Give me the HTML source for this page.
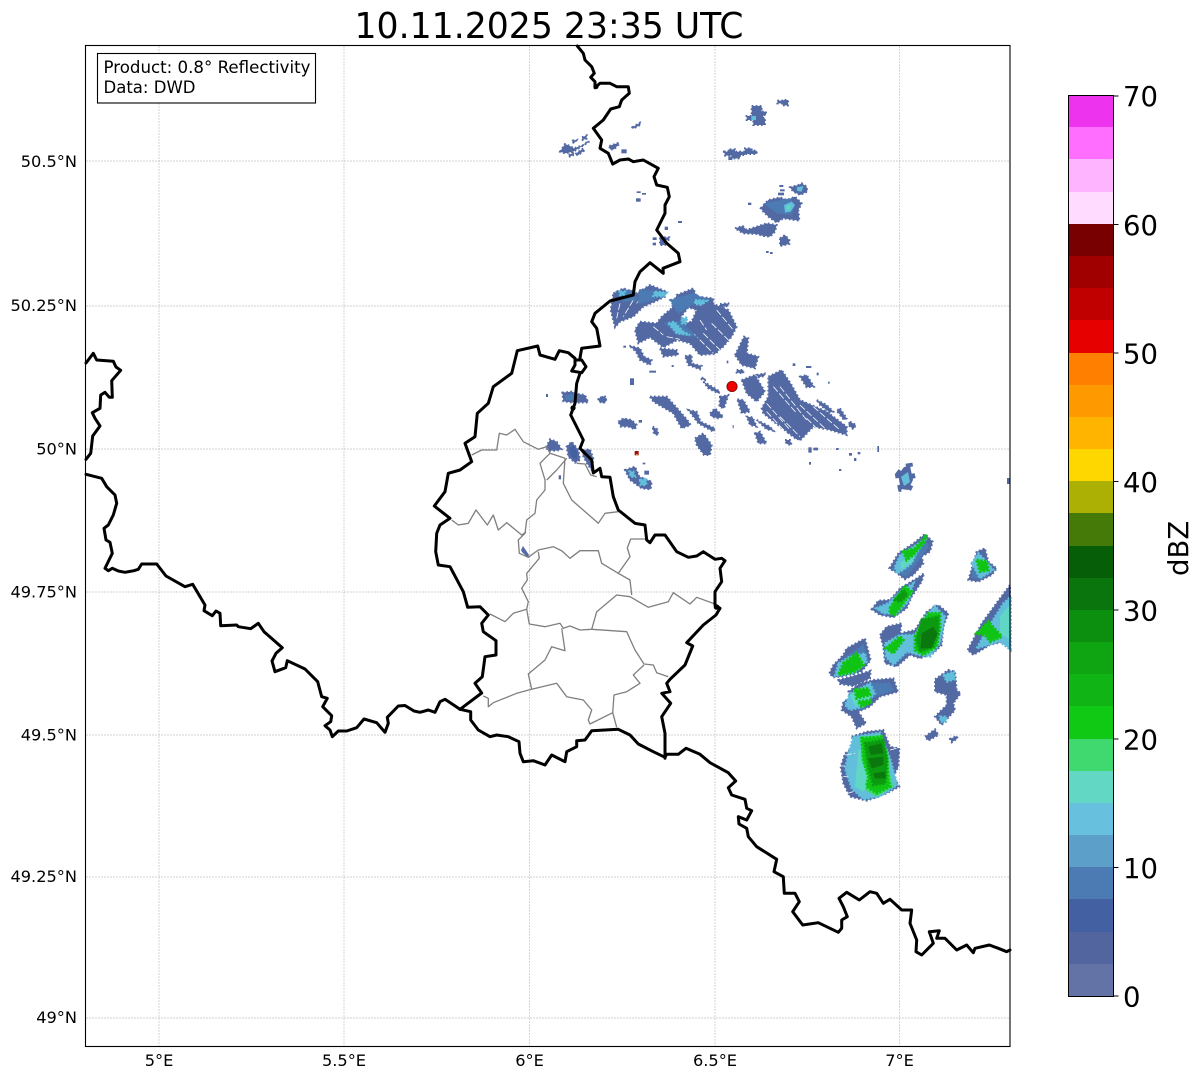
<!DOCTYPE html>
<html><head><meta charset="utf-8"><style>
html,body{margin:0;padding:0;background:#fff;width:1202px;height:1081px;overflow:hidden}
svg{display:block}
text{font-family:"DejaVu Sans","Liberation Sans",sans-serif;fill:#000}
.b{fill:#5369a3}.m{fill:#4c7ab2}.l{fill:#62bfdc}.t{fill:#60d6c4}.g{fill:#10c414}.d{fill:#0c9a10}.k{fill:#0a780d}.f{fill:#3fd970}
g.b path{stroke:#5369a3;stroke-width:6;stroke-dasharray:5 7}
g.m path{stroke:#4c7ab2;stroke-width:5;stroke-dasharray:6 6}
g.l path{stroke:#62bfdc;stroke-width:7;stroke-dasharray:6 5}
g.g path{stroke:#10c414;stroke-width:9;stroke-dasharray:7 4}
g.d path{stroke:#0c9a10;stroke-width:8;stroke-dasharray:6 4}
.w{stroke:#fff;stroke-width:2.4;fill:none;stroke-dasharray:20 7}
</style></head><body>
<svg width="1202" height="1081" viewBox="0 0 1202 1081" xmlns="http://www.w3.org/2000/svg">
<rect width="1202" height="1081" fill="#fff"/>
<!-- grid -->
<g stroke="#c2c2c2" stroke-width="0.7" stroke-dasharray="2 1" fill="none">
<path d="M159 46V1046M344 46V1046M529.5 46V1046M715 46V1046M899.5 46V1046"/>
<path d="M86 161H1010M86 306H1010M86 449H1010M86 592H1010M86 735H1010M86 877H1010M86 1018H1010"/>
</g>
<!-- radar north (zoom 4 coords) -->
<g transform="translate(550 90) scale(.33333)">
<g class="b">
<path d="M605 48H635V65H648V75H640V85H645V105H610V90H590V78H605Z"/>
<path d="M682 32H700V30H714V46H698V40H682Z"/>
<path d="M522 185H535V178H555V185H585V175H605V182H620V192H585V195H570V205H545V197H525Z"/><rect x="535" y="200" width="12" height="10"/>
<path d="M632 355L655 330L690 322L710 330L735 320L755 340L745 360L748 392L700 385L680 398L655 380L640 365Z"/>
<path d="M720 292L745 285L755 280L770 290L772 305L750 315L730 305Z"/>
<path d="M555 415L578 408L590 420L620 410L650 400L680 405L675 425L660 440L640 438L620 432L580 430Z"/>
<path d="M690 445L705 435L718 450L718 462L690 468Z"/>
<rect x="688" y="285" width="12" height="6"/><rect x="690" y="298" width="14" height="6"/><rect x="684" y="308" width="18" height="8"/><rect x="594" y="338" width="10" height="7"/><rect x="648" y="483" width="8" height="6"/><rect x="660" y="486" width="8" height="6"/>
<path d="M30 185L45 162L60 168L72 175L100 165L115 152L116 156L70 185L45 190Z"/><path d="M68 152L80 150L75 158L66 158Z"/><path d="M96 142L110 136L110 146L98 150Z"/><path d="M56 195L72 188L72 194L60 200Z"/><path d="M76 192L100 175L102 182L84 196Z"/>
<path d="M178 168L207 158L205 165L192 178L180 178Z"/><rect x="214" y="178" width="16" height="12"/><path d="M247 112L270 98L272 104L250 116Z"/>
<rect x="260" y="304" width="12" height="5"/><rect x="276" y="309" width="12" height="5"/><rect x="258" y="325" width="14" height="10"/>
<rect x="384" y="393" width="12" height="6"/><rect x="344" y="410" width="10" height="10"/><rect x="308" y="442" width="12" height="8"/><path d="M330 442H358V450H345V465H330Z"/><rect x="308" y="458" width="10" height="8"/>
</g>
<path class="l" d="M604 78H618V90H604Z"/>
<path class="m" d="M640 340L720 325L735 345L725 375L680 370Z"/>
<path class="l" d="M702 345L725 335L735 345L722 365L705 368Z"/><path class="t" d="M708 350L720 344L722 358L710 360Z"/>
<path class="l" d="M740 292L760 288L755 305L742 303Z"/>
</g>
<!-- radar central (zoom 5 coords) -->
<g transform="translate(600 280) scale(.33333)">
<g class="b">
<path d="M40 40L70 25L110 40L150 15L200 35L195 50L165 65L130 80L100 110L60 125L45 142L32 90Z"/>
<path fill-rule="evenodd" d="M230 45L280 25L290 50L340 55L340 72L385 90L410 140L395 170L370 200L345 222L300 225L270 190L232 180L190 202L150 172L115 190L105 150L120 125L170 130L185 110L215 85ZM240 115L265 82L290 90L275 125L250 130Z"/>
<path d="M405 225L432 170L445 175L440 220L475 230L465 265L425 255Z"/>
<path d="M505 290L545 270L572 310L600 360L680 395L740 440L740 465L690 450L640 440L600 482L540 440L490 400L485 385L505 350Z"/>
<path d="M425 300L465 285L495 335L470 365L440 340Z"/>
<path d="M600 290L620 285L642 320L620 322Z"/>
<path d="M360 350L385 345L372 385L358 380Z"/><path d="M412 358L430 360L450 395L425 400Z"/><path d="M440 410L458 412L470 440L450 435Z"/><path d="M465 460L480 455L500 490L475 490Z"/><path d="M555 480L570 480L575 495L560 492Z"/>
<path d="M150 350L200 350L232 385L262 420L272 435L245 445L220 400L160 365Z"/>
<path d="M265 390L290 395L302 425L345 445L340 455L295 430Z"/>
<path d="M330 400L345 385L370 410L355 415L335 410Z"/>
<path d="M55 425L70 415L95 420L110 435L105 448L85 440L62 440Z"/><rect x="116" y="420" width="10" height="8"/>
<path d="M285 475L310 460L335 495L330 525L312 525L290 495Z"/>
<path d="M75 570L105 560L118 590L155 605L152 628L125 625L90 600Z"/>
<path d="M158 440L172 448L175 465L162 462Z"/>
<rect x="90" y="295" width="12" height="20"/><path d="M0 353L15 350L18 365L5 368Z"/>
<path d="M255 228L275 225L275 250L305 258L300 268L265 255Z"/>
<path d="M88 197L120 205L132 230L155 240L150 255L120 240L108 215Z"/>
<path d="M180 205L230 210L235 225L190 230Z"/>
<path d="M310 305L340 322L360 335L355 340L325 325Z"/><path d="M305 293L315 295L315 300L305 298Z"/>
<rect x="128" y="548" width="8" height="5"/><rect x="133" y="572" width="14" height="12"/>
<rect x="148" y="272" width="20" height="6"/>
<rect x="625" y="502" width="10" height="16"/><rect x="640" y="503" width="14" height="8"/><rect x="708" y="504" width="8" height="6"/><rect x="747" y="519" width="9" height="8"/><rect x="773" y="516" width="8" height="7"/><rect x="762" y="534" width="7" height="9"/><rect x="717" y="567" width="7" height="6"/><rect x="627" y="546" width="6" height="8"/><rect x="832" y="498" width="5" height="18"/>
<path d="M360 72L385 70V78L360 82Z"/><rect x="578" y="250" width="8" height="8"/><rect x="618" y="258" width="16" height="6"/><rect x="650" y="278" width="6" height="8"/><rect x="684" y="305" width="5" height="6"/><rect x="380" y="242" width="5" height="8"/><rect x="398" y="435" width="3" height="10"/><rect x="215" y="255" width="6" height="6"/><rect x="70" y="197" width="8" height="6"/>
<path d="M750 425L768 435L760 448L745 435Z"/><path d="M720 385L740 415L732 420L710 392Z"/><path d="M470 285L494 280V288L475 292Z"/><path d="M410 270L430 270L430 280L410 278Z"/>
<path d="M650 360L680 375L700 395L690 398L660 375Z"/><path d="M470 420L510 440L520 452L500 448Z"/><path d="M560 455L600 470L590 478Z"/>
</g>
<g class="w">
<path d="M520 320L590 400M540 320L620 420M500 370L570 450M540 410L600 470M600 375L680 450M640 380L720 450M500 395L560 460M620 415L670 465"/>
<path d="M280 160L340 220M310 160L365 215M335 130L390 185M200 170L240 178M160 140L190 165M300 120L320 150M350 90L400 150"/>
<path d="M60 70L50 115M100 60L70 110M130 40L110 70"/>
</g>
<g class="m"><path d="M50 35L100 30L110 60L70 65Z"/><path d="M120 30L190 35L160 60L115 70Z"/><path d="M210 60L280 40L330 65L280 70L235 100Z"/><path d="M195 130L240 125L290 170L240 165Z"/></g>
<g class="l"><path d="M165 35L200 38L190 50L160 48Z"/><path d="M205 130L222 125L250 155L270 165L230 160Z"/><path d="M245 115L262 112L256 132L245 130Z"/><path d="M285 60L320 62L305 75L285 72Z"/><path d="M60 35L75 35L72 45L60 45Z"/><path d="M120 600L140 595L138 615L122 615Z"/><path d="M88 575L100 575L105 590L92 590Z"/></g>
<rect x="104" y="513" width="12" height="13" fill="#a01010"/><rect x="108" y="522" width="5" height="4" fill="#d8a020"/>
</g>
<!-- radar west (zoom 1 coords) -->
<g transform="translate(400 240) scale(.33333)">
<g class="b">
<path d="M487 458L515 455L535 462L555 465L565 487L520 488L490 484Z"/><path d="M595 478L610 470L618 478L612 488L598 486Z"/><rect x="438" y="462" width="6" height="9"/>
<path d="M438 622L450 598L470 605L485 628L470 632L445 632Z"/><path d="M500 620L515 605L535 630L540 660L525 668L505 650Z"/>
<path d="M548 630L570 628L580 655L575 690L562 672L548 645Z"/><rect x="476" y="706" width="7" height="12"/>
</g>
<path fill="#4360a2" d="M508 625L522 615L532 640L530 660L515 650Z"/>
<path class="m" d="M495 465L520 462L525 480L497 480Z"/>
</g>
<path class="b" d="M521 550L523 546L529 555L528 558L522 552Z"/>
<!-- radar east (zoom 3 coords) -->
<g transform="translate(800 520) scale(.33333)">
<g class="b">
<path d="M268 145L295 100L340 70L375 42L398 65L390 95L365 110L370 130L340 165L315 178L285 155Z"/>
<path d="M215 268L235 242L270 240L300 205L350 175L372 160L365 185L335 230L320 265L280 292L240 285Z"/>
<path d="M240 345L260 320L305 310L300 340L345 330L380 275L415 255L445 280L430 320L425 375L400 400L360 415L330 405L290 440L255 430L250 380Z"/>
<path d="M88 460L100 435L130 405L140 385L195 355L212 420L185 455L125 470L100 472Z"/><path d="M115 480L160 468L212 452L210 475L160 498L120 492Z"/>
<path d="M145 515L180 490L220 480L280 475L292 510L295 515L240 530L210 560L175 575L198 610L170 625L155 590L125 570L130 545L150 535Z"/>
<path d="M155 650L200 635L250 630L270 680L298 685L295 740L280 770L298 800L250 825L200 842L150 830L130 790L122 740L135 700L165 680Z"/>
<path d="M505 180L520 130L530 95L555 85L565 125L590 145L575 165L535 185Z"/>
<path d="M503 390L545 310L600 235L630 195V385L610 365L570 375L520 405Z"/>
<path d="M405 478L445 450L465 455L470 510L482 520L460 550L465 570L425 615L405 590L440 555L440 525L405 515Z"/>
<path d="M375 650L405 628L415 645L385 662Z"/><path d="M450 657L470 648L473 655L455 667Z"/>
</g>
<g class="m"><path d="M275 150L300 110L340 80L375 55L385 80L350 130L320 170Z"/><path d="M225 265L265 245L300 215L345 185L330 240L290 285L250 282Z"/><path d="M250 380L290 345L345 340L400 260L435 285L420 375L380 410L330 395L285 432L258 420Z"/><path d="M140 410L190 375L205 420L160 462L105 465Z"/><path d="M150 520L220 490L270 490L280 510L220 530L190 570L140 565Z"/><path d="M520 130L535 100L560 125L585 150L540 178L515 170Z"/></g>
<g class="l"><path d="M285 140L300 105L340 80L380 55L350 100L335 130L310 150L290 160Z"/><path d="M228 265L265 250L300 215L340 190L325 245L290 280L250 280Z"/><path d="M255 370L300 345L345 345L375 290L405 258L435 290L420 370L390 410L355 405L320 395L280 435L258 410Z"/><path d="M115 430L150 410L195 400L200 425L165 458L105 468Z"/><path d="M150 520L210 490L225 520L190 560L150 570L135 555Z"/><path d="M160 650L240 638L272 720L292 795L240 830L190 838L155 805L135 745L145 700Z"/><path d="M515 130L535 100L560 125L580 150L540 175Z"/><path d="M530 385L560 330L610 250L632 230V390L600 365Z"/><path d="M430 465L462 455L465 478L440 485Z"/><path d="M420 590L440 590L438 605L422 605Z"/></g>
<g class="t"><path d="M175 690L195 680L210 790L190 815L165 800Z"/><path d="M300 130L340 95L340 125L305 150Z"/><path d="M600 290L632 250V360L600 340Z"/><path d="M345 360L385 340L395 395L355 400Z"/><path d="M150 525L200 500L210 545L165 560Z"/></g>
<g class="f"><path d="M180 650L245 645L265 700L270 760L280 800L230 830L195 810L205 770L185 720Z"/></g>
<g class="g"><path d="M310 95L345 85L380 45L370 70L340 105L320 120Z"/><path d="M270 265L290 230L315 200L335 215L310 250L285 285L270 280Z"/><path d="M258 385L300 350L310 360L280 400Z"/><path d="M345 350L385 280L420 280L420 320L410 380L370 405L345 390Z"/><path d="M130 430L170 400L190 435L165 455L115 465Z"/><path d="M165 510L205 505L210 525L170 535Z"/><path d="M175 545L215 540L210 550L185 560Z"/><path d="M185 655L245 650L260 720L265 780L270 800L230 820L200 800L205 770L190 720Z"/><path d="M530 120L560 125L565 150L540 155Z"/><path d="M530 340L565 305L605 350L570 365L555 345Z"/></g>
<g class="d"><path d="M365 300L415 290L415 340L400 380L360 395L350 360Z"/><path d="M195 670L250 660L262 720L255 790L220 795L205 740Z"/><path d="M285 240L310 210L322 225L300 245Z"/></g>
<g class="k"><path d="M365 340L400 320L412 340L395 385L362 385Z"/><path d="M205 680L245 670L250 700L212 705Z"/><path d="M205 715L250 710L250 735L215 745Z"/><path d="M220 760L255 755L258 775L225 775Z"/></g>
<path class="w" d="M120 738L135 738M130 770L145 768M142 820L160 815M270 690L290 685M255 825L235 835M135 705L165 700"/>
</g>
<g class="b"><path d="M898 475L904 467L910 466L913 480L908 490L901 489Z"/><rect x="1007" y="478" width="3" height="6"/></g>
<path class="l" d="M901 477L908 472L910 482L904 486Z"/>
<!-- borders: gray -->
<g fill="none" stroke="#7f7f7f" stroke-width="1.3" stroke-linejoin="round">
<path d="M471.7 455L481.7 450L496.7 450L499.3 433.3L506.7 435L515 429.3L523.3 441.7L538.3 449.3L546.7 446.7L550 453.3L540 463.3L545 480L545 490L536.7 500L535 513.3L526.7 520L525 533.3L518.3 540L519.3 553.3L528.3 557.3L538.3 550L553.3 546.7L562 551L570 558.3L580 550.7L598.3 550.7L601.7 563.3L618.3 573.3L630 556.7L627.3 548L630.7 539L646.7 539"/>
<path d="M565 458.3L563.3 483.3L571.7 500L598.3 523.3L605 513.3L618.3 511.7M566.7 458.3L556.7 470L546.7 480M576.7 463.3L585 464L590.7 475L596.7 476.7M550 453.3L565 458.3"/>
<path d="M451.7 520L458.3 525L468.3 523.3L476 510L487.3 525L493.3 515L498.3 530L506.7 522.7L521.7 535L526 532"/>
<path d="M538.3 551.7L539.3 558.3L526.7 573.3L527.3 580L521.7 588.3L528.3 601.7L526.7 609.3L513.3 613.3L505 621.7L490 614"/>
<path d="M526.7 609.3L529.3 624L545 626.7L560 623.3L563.3 628.3L570 626L580 630L591.7 629.3L596.7 611.7L616.7 595L630 596.7L648.3 607.3L668.3 601.7L673.3 592.7L690 604L696.7 597.3L715 604"/>
<path d="M618.3 573.3L630 580L631.7 595M591.7 629.3L626.7 631.7L635 650L644 664L653.3 665L656.7 672.7L668.3 676.7"/>
<path d="M644 665L633.3 675L640 683.3L626.7 691.7L614 695L612.7 712.7L616.7 727.3"/>
<path d="M612.7 712.7L590 724L588.3 720L591.7 710L583.3 700L566.7 696.7L556.7 683.3L531.7 689.3L528.3 674L545 660L551.7 646.7L565 650.7L561.7 628.3"/>
<path d="M531.7 689.3L516.7 693.3L493.3 702.7L488.3 706.7L488.3 698.3L483.3 696"/>
</g>
<!-- borders: black -->
<g fill="none" stroke="#000" stroke-width="3" stroke-linejoin="round" stroke-linecap="round">
<path d="M86 363L93.3 353.3L96.7 360L113.3 361.3L116 367L120.7 370.3L111.7 380.7L112.3 397.3L109.3 397.3L105 392.3L100.7 395L100 408.3L92.3 412.7L95 418.3L100 426L92.7 436L90.7 453.3L86 459.3"/>
<path d="M86 474.3L101.7 478.3L106.7 486.7L115 495L116.7 503.3L113.3 515L108.3 525L104 528.3L106 540L110 542.3L112.3 553.3L105 568.3L108.3 570.7L112.3 568.3L118.3 571L125 572.3L134 570.7L138.3 569.3L141.7 564L156.7 564L166 576L185 586.7L192.7 584.3L205 605L204 610.7L212.3 615.7L216 611L220 613.3L220.7 625.7L236.7 625L238.3 626.7L250.7 628.7L258.3 623.3L264 631.7L282.3 647.7L276 653.3L272 661L275 671.7L285.7 667.7L287.3 660.7L305 669L317.7 681.7L321.7 696.7L327.3 698.3L322.7 706.7L331.7 715.7L330.7 721.7L325 725.7L330 730L332.3 736.7L338.3 731L346.7 731L356.7 727.7L364 719L376.7 722.7L385 732.3L388.3 723.3L387.3 717.3L398.3 706L405 705.5L414 711L420 712.3L428.3 710L435 712.3L440 701.7L445 699.3L460 709.3"/>
<path d="M460 709.3L470.7 711.7L470.7 720L478.3 730L490 736.7L496.7 735L508.3 736.7L519 741.7L520 753.3L523.3 761.7L533.3 760.7L545 765L551.7 755L565 761.7L566.7 751.7L576.7 746.7L576.7 740.7L585 740L591.7 730.7L618.3 729.3L630 735L638.3 744L653.3 751.7L665 757.3L666.7 754.3L678.3 754.3L686 748.3L700 754.3L710 762.7L728.3 772.7L735.7 781L728.3 787.7L731.7 795L745 799.3L746.7 808.3L751.7 810.7L746.7 820L738.3 816.7L739 824L746.7 828.3L748.3 836.7L756.7 846.7L776.7 859.3L774 871.7L783.3 876.7L784.3 893.3L795 893.3L799.3 901.7L792.7 911.7L802.7 925L818.3 922.7L838.3 932.3L841.7 928.3L841.7 920L847.3 916.7L843.3 906.7L839 898.3L846.7 892.3L859.3 900L870 891.7L876.7 893.3L883.3 903.3L890 899.3L901.7 910L911.7 910L910 923.3L916.7 940L916 951.7L921.7 955L933.3 943.3L929.3 931.7L939.3 930.7L936.7 938.3L945 938.3L956.7 950L966.7 945L973.3 952.7L975 948.3L989.3 945L998.3 948.3L1006.7 951.7L1010 950"/>
<path d="M460 709.3L481.7 693L475 683.3L482.3 676.7L485 656.7L496 655L496 640.7L483.3 631.7L481.7 623.3L488.3 615L480 606.7L467.7 607.3L463.3 591.7L450 566.7L438.3 565L435.7 551.7L436.7 533.3L440 525L450 518.3L434.3 506L445 491.7L448.3 473.3L460 470L471.7 461.7L465 443.3L475 436.7L477.3 413.3L488.3 403.3L493.3 386.7L511.7 373.3L517.3 350.7L537.7 346L540 355L555 359.3L559.3 350.7L568.3 352.7L575 358.3L575 365L571.7 371L581.7 372.7L586 366.7L581.7 360L575 360M580 373.3L576.7 383.3L575 403.3L570.7 415L578.3 430L583.3 440L580 448.3L591.7 460L593.3 473L600 468.3L601.7 476.7L610 477.3L613.3 496.7L618.3 510L635 523.3L645 525L646.7 540L650 542.7L655 535L665 535L676.7 551.7L688.3 557.3L696.7 556L703.3 551.7L715 559.3L721.7 558.3L725 560.7L720 568.3L721.7 581.7L715 591.7L715 605L720 608.3L716 615L703.3 625L686.7 642.7L692.7 646L685 665L670 679.3L666.7 683.3L670 691.7L661.7 693.3L670.7 703.3L661.7 716.7L665 733.3L665 758.3"/>
<path d="M580 358L581.7 348.3L600 346L596.7 328.3L591.7 321.7L595 313.3L610 301L633.3 295L635 281.7L640 271.7L650 262.7L663.3 273.3L663 268.3L680 261.7L678.3 253.3L666.7 243.3L656.7 230L665 213.3L665 205L669.3 196.7L667.3 187.3L656.7 185L654 176.7L658.3 168.3L643.3 160L633.3 161.7L628.3 159L620 160L612.7 164L608.3 153.3L600 148.3L601.7 140L593.3 128.3L603.3 120L610.7 109L619.3 106.7L621.7 100L629.3 93.3L628.3 86.7L616.7 86.7L610 83.3L600 83.3L595 87.7L595 81.7L590.7 77.3L594.3 73.3L591.7 66.7L585 60L583.3 53.3L577.3 46"/>
</g>
<circle cx="596" cy="86.5" r="2.6" fill="#000"/><circle cx="716.5" cy="607" r="2.8" fill="#000"/><circle cx="573" cy="408" r="2.6" fill="#000"/>
<!-- radar site -->
<circle cx="732" cy="386.5" r="5.2" fill="#f00000" stroke="#600" stroke-width=".7"/>
<!-- frame -->
<rect x="85.5" y="45.5" width="924.5" height="1001" fill="none" stroke="#000" stroke-width="1.1"/>
<!-- info box -->
<rect x="97.5" y="53.5" width="218" height="49.5" fill="#fff" stroke="#000" stroke-width="1.1"/>
<text x="103.5" y="73" font-size="16.8" textLength="207" lengthAdjust="spacingAndGlyphs">Product: 0.8° Reflectivity</text>
<text x="103.5" y="93" font-size="16.8" textLength="92" lengthAdjust="spacingAndGlyphs">Data: DWD</text>
<!-- title -->
<text x="549" y="38" font-size="35.5" text-anchor="middle" textLength="389" lengthAdjust="spacingAndGlyphs">10.11.2025 23:35 UTC</text>
<!-- tick labels -->
<g font-size="16.2" text-anchor="end">
<text x="77" y="167">50.5°N</text><text x="77" y="311">50.25°N</text><text x="77" y="454.5">50°N</text><text x="77" y="597.5">49.75°N</text><text x="77" y="740.5">49.5°N</text><text x="77" y="882">49.25°N</text><text x="77" y="1023">49°N</text>
</g>
<g font-size="16.2" text-anchor="middle">
<text x="159" y="1066">5°E</text><text x="344" y="1066">5.5°E</text><text x="529.5" y="1066">6°E</text><text x="715" y="1066">6.5°E</text><text x="899.5" y="1066">7°E</text>
</g>
<!-- colorbar -->
<g shape-rendering="crispEdges">
<rect x="1068" y="964" width="45.5" height="32.5" fill="#6373a5"/>
<rect x="1068" y="932" width="45.5" height="32" fill="#52659f"/>
<rect x="1068" y="899" width="45.5" height="33" fill="#4360a2"/>
<rect x="1068" y="867" width="45.5" height="32" fill="#4c7ab2"/>
<rect x="1068" y="835" width="45.5" height="32" fill="#5c9fc8"/>
<rect x="1068" y="803" width="45.5" height="32" fill="#66c0de"/>
<rect x="1068" y="771" width="45.5" height="32" fill="#62d8c4"/>
<rect x="1068" y="739" width="45.5" height="32" fill="#3fd970"/>
<rect x="1068" y="706" width="45.5" height="33" fill="#10c914"/>
<rect x="1068" y="674" width="45.5" height="32" fill="#10b414"/>
<rect x="1068" y="642" width="45.5" height="32" fill="#0fa411"/>
<rect x="1068" y="610" width="45.5" height="32" fill="#0c8e0f"/>
<rect x="1068" y="578" width="45.5" height="32" fill="#0b750d"/>
<rect x="1068" y="546" width="45.5" height="32" fill="#075e09"/>
<rect x="1068" y="513" width="45.5" height="33" fill="#457a08"/>
<rect x="1068" y="481" width="45.5" height="32" fill="#adb004"/>
<rect x="1068" y="449" width="45.5" height="32" fill="#ffd700"/>
<rect x="1068" y="417" width="45.5" height="32" fill="#ffb400"/>
<rect x="1068" y="385" width="45.5" height="32" fill="#ff9900"/>
<rect x="1068" y="353" width="45.5" height="32" fill="#ff8000"/>
<rect x="1068" y="320" width="45.5" height="33" fill="#e60000"/>
<rect x="1068" y="288" width="45.5" height="32" fill="#c00000"/>
<rect x="1068" y="256" width="45.5" height="32" fill="#a00000"/>
<rect x="1068" y="224" width="45.5" height="32" fill="#780000"/>
<rect x="1068" y="192" width="45.5" height="32" fill="#ffdcff"/>
<rect x="1068" y="159" width="45.5" height="33" fill="#ffb4ff"/>
<rect x="1068" y="127" width="45.5" height="32" fill="#ff6eff"/>
<rect x="1068" y="95" width="45.5" height="32" fill="#ee33ee"/>
</g>
<rect x="1068.5" y="95.5" width="45" height="901" fill="none" stroke="#000" stroke-width="1"/>
<path d="M1113.5 96H1118.5M1113.5 224.5H1118.5M1113.5 353H1118.5M1113.5 481.5H1118.5M1113.5 610H1118.5M1113.5 739H1118.5M1113.5 867.5H1118.5M1113.5 996H1118.5" stroke="#000" stroke-width="1" fill="none"/>
<g font-size="27.5">
<text x="1123" y="106">70</text><text x="1123" y="235">60</text><text x="1123" y="363.5">50</text><text x="1123" y="492">40</text><text x="1123" y="620.5">30</text><text x="1123" y="749.5">20</text><text x="1123" y="878">10</text><text x="1123" y="1006.5">0</text>
</g>
<text transform="translate(1188 576) rotate(-90)" font-size="27.5">dBZ</text>
</svg>
</body></html>
